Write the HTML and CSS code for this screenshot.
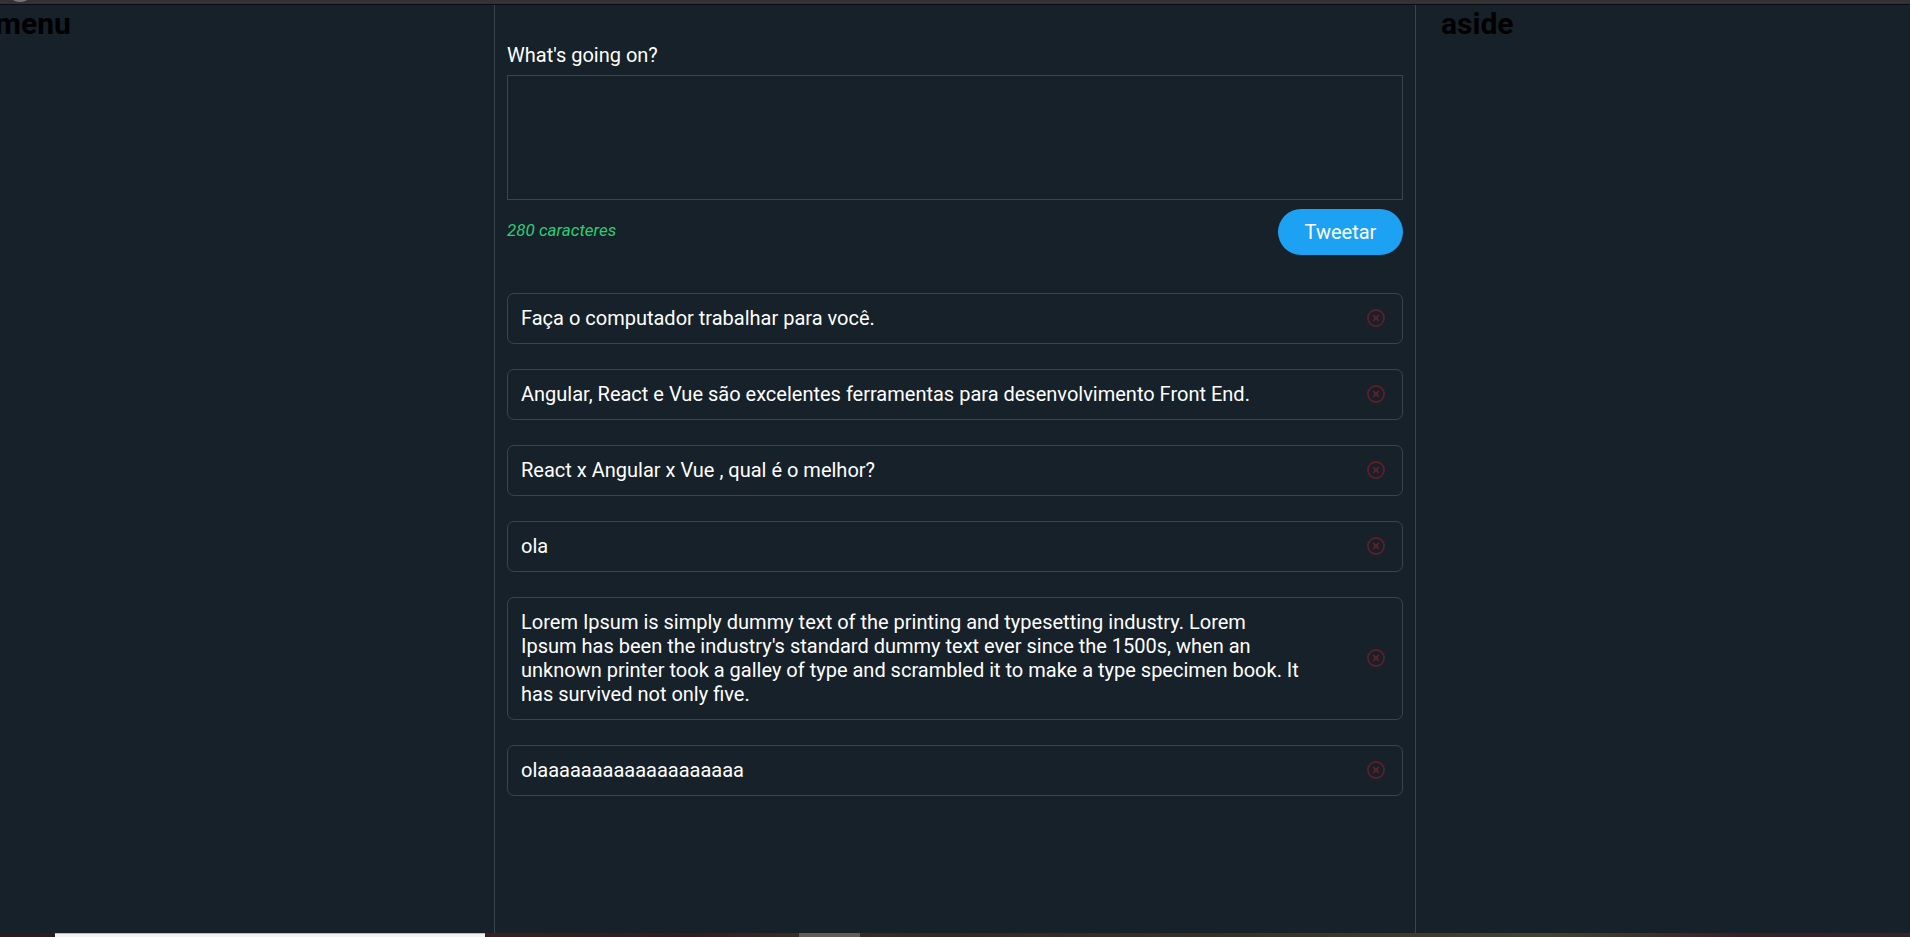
FILE: index.html
```html
<!DOCTYPE html>
<html lang="pt-BR">
<head>
<meta charset="utf-8">
<title>Tweets</title>
<link rel="stylesheet" href="styles.css">
</head>
<body>
<svg class="sprite" aria-hidden="true">
  <symbol id="remove" viewBox="0 0 18 18">
    <circle cx="9" cy="9" r="8.1" fill="none" stroke="currentColor" stroke-width="1.6"/>
    <path d="M6.2 6.2l5.6 5.6M11.8 6.2l-5.6 5.6" fill="none" stroke="currentColor" stroke-width="1.7"/>
  </symbol>
</svg>
<div class="topbar"><span class="topbar-dot"></span></div>
<div class="layout">
  <nav class="menu"><h2>menu</h2></nav>
  <main class="feed">
    <form class="composer">
      <label for="tweet">What's going on?</label>
      <textarea id="tweet"></textarea>
      <div class="composer-footer">
        <span class="counter">280 caracteres</span>
        <button class="send" type="button">Tweetar</button>
      </div>
    </form>
    <ul class="tweets">
      <li class="tweet"><p>Faça o computador trabalhar para você.</p><button class="remove" type="button" aria-label="Remover"><svg><use href="#remove"/></svg></button></li>
      <li class="tweet"><p>Angular, React e Vue são excelentes ferramentas para desenvolvimento Front End.</p><button class="remove" type="button" aria-label="Remover"><svg><use href="#remove"/></svg></button></li>
      <li class="tweet"><p>React x Angular x Vue , qual é o melhor?</p><button class="remove" type="button" aria-label="Remover"><svg><use href="#remove"/></svg></button></li>
      <li class="tweet"><p>ola</p><button class="remove" type="button" aria-label="Remover"><svg><use href="#remove"/></svg></button></li>
      <li class="tweet"><p>Lorem Ipsum is simply dummy text of the printing and typesetting industry. Lorem Ipsum has been the industry's standard dummy text ever since the 1500s, when an unknown printer took a galley of type and scrambled it to make a type specimen book. It has survived not only five.</p><button class="remove" type="button" aria-label="Remover"><svg><use href="#remove"/></svg></button></li>
      <li class="tweet"><p>olaaaaaaaaaaaaaaaaaaa</p><button class="remove" type="button" aria-label="Remover"><svg><use href="#remove"/></svg></button></li>
    </ul>
  </main>
  <aside class="aside"><h2>aside</h2></aside>
</div>
<div class="taskbar"><span class="taskbar-search"></span><span class="taskbar-active"></span></div>
</body>
</html>
```
FILE: styles.css
```css
* {
  box-sizing: border-box;
  margin: 0;
  padding: 0;
}

body {
  display: flex;
  flex-direction: column;
  min-height: 100vh;
  overflow-x: hidden;
  background: #16212a;
  color: #fff;
  font: 20px/24px Roboto, sans-serif;
}

.sprite {
  display: none;
}

.topbar {
  height: 5px;
  overflow: hidden;
  padding-left: 6px;
  background: #333;
  border-bottom: 1px solid #0a0e13;
}

.topbar-dot {
  display: block;
  width: 28px;
  height: 28px;
  margin-top: -26px;
  border-radius: 50%;
  background: #777;
}

.layout {
  flex: 1;
  display: grid;
  grid-template-columns: 1fr minmax(0, 922px) 1fr;
}

h2 {
  color: #000;
  font-size: 30px;
  line-height: 38px;
}

.menu h2 {
  margin-left: -5px;
}

.aside {
  padding-left: 25px;
}

.feed {
  padding: 38px 12px 0;
  border: solid #3a444c;
  border-width: 0 1px;
}

.composer label {
  display: block;
  margin-bottom: 8px;
}

.composer textarea {
  display: block;
  width: 100%;
  height: 125px;
  padding: 12px;
  border: 1px solid #3a444c;
  background: transparent;
  color: #fff;
  font: inherit;
  resize: none;
}

.composer-footer {
  display: flex;
  justify-content: space-between;
  align-items: flex-start;
  margin-top: 9px;
}

.counter {
  margin-top: 9px;
  color: #2ecc71;
  font-size: 17px;
  font-style: italic;
}

.send {
  width: 125px;
  height: 46px;
  border: 0;
  border-radius: 23px;
  background: #1da1f2;
  color: #fff;
  font: inherit;
}

.tweets {
  display: grid;
  gap: 25px;
  margin-top: 38px;
  list-style: none;
}

.tweet {
  display: flex;
  justify-content: space-between;
  align-items: center;
  padding: 12px 17px 13px 13px;
  border: 1px solid #3a444c;
  border-radius: 7px;
}

.tweet p {
  max-width: 784px;
}

.remove {
  width: 18px;
  height: 18px;
  border: 0;
  background: none;
  color: #661f28;
}

.remove svg {
  display: block;
  width: 18px;
  height: 18px;
}

.taskbar {
  display: flex;
  height: 4px;
  background: linear-gradient(90deg, #2b1c22, #38201f 28%, #351b1d 36%, #3a2c25 42%, #352823 50%, #3b3026 65%, #45422f 81%, #3c1f24 91%, #35222a);
}

.taskbar-search {
  width: 430px;
  margin-left: 55px;
  border-top: 1px solid #b9bec2;
  background: #f2f2f2;
}

.taskbar-active {
  width: 61px;
  margin-left: 314px;
  background: #665a55;
}
```
